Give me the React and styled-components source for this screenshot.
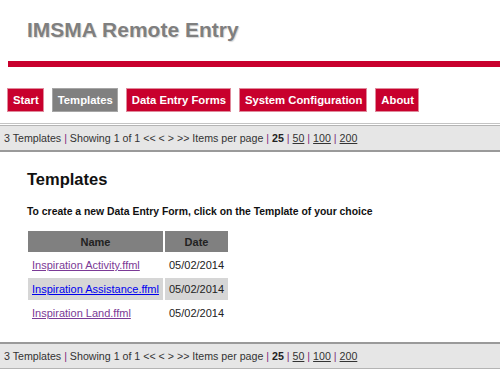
import React from "react";
import styled, { createGlobalStyle } from "styled-components";

const GlobalStyle = createGlobalStyle`
  html, body {
    margin: 0;
    padding: 0;
    background: #fff;
    font-family: "Liberation Sans", Arial, sans-serif;
  }
`;

const Page = styled.div`
  width: 500px;
  min-height: 382px;
  background: #fff;
`;

const Header = styled.header`
  padding: 18px 0 0 27px;
`;

const Title = styled.h1`
  margin: 0;
  font-size: 21px;
  line-height: 24px;
  font-weight: bold;
  color: #7f7f7f;
  text-shadow: 1px 1px 1px #d8d8d8;
`;

const RedRule = styled.div`
  height: 6px;
  margin: 19px 0 0 8px;
  background: #c8002d;
`;

const Nav = styled.nav`
  display: flex;
  gap: 10px;
  padding: 22px 0 12px 8px;
  border-bottom: 1px solid #c4c4c4;
`;

const NavButton = styled.a`
  display: block;
  height: 22px;
  padding: 0 4px 0 5px;
  line-height: 22px;
  font-size: 11.3px;
  font-weight: bold;
  color: #fff;
  text-decoration: none;
  background: ${p => (p.active ? "#808080" : "#c8002d")};
  box-shadow: 0 0 0 1px ${p => (p.active ? "#a6a6a6" : "#e08a9c")};
`;

const PagerBar = styled.div`
  margin-top: ${p => (p.bottom ? "16px" : "1px")};
  height: 24px;
  padding: 0 4px;
  line-height: 24px;
  font-size: 10.65px;
  color: #333;
  background: #e6e6e6;
  border-top: ${p => (p.bottom ? "2px solid #9a9a9a" : "1px solid #b4b4b4")};
  border-bottom: ${p => (p.bottom ? "1px solid #b4b4b4" : "2px solid #9a9a9a")};
`;

const Sep = styled.span`
  color: #7a2a7a;
`;

const Current = styled.b`
  color: #222;
`;

const PageLink = styled.a`
  color: #333;
  text-decoration: underline;
`;

const Content = styled.section`
  padding: 18px 0 0 27px;
`;

const Heading = styled.h2`
  margin: 0;
  font-size: 16.5px;
  line-height: 19px;
  font-weight: bold;
  color: #111;
`;

const Intro = styled.p`
  margin: 16px 0 0;
  font-size: 10.4px;
  line-height: 13px;
  font-weight: bold;
  color: #111;
`;

const Table = styled.table`
  margin: 11px 0 0 -1px;
  border-spacing: 2px;
  font-size: 11px;
`;

const Th = styled.th`
  height: 21px;
  padding: 0;
  width: ${p => p.w}px;
  background: #808080;
  color: #222;
  font-weight: bold;
  text-align: center;
`;

const Td = styled.td`
  height: 22px;
  padding: 0 4px;
  background: ${p => (p.hover ? "#d6d6d6" : "transparent")};
  color: #222;
`;

const FileLink = styled.a`
  color: ${p => (p.hover ? "#0000ee" : "#7b3a96")};
  text-decoration: underline;
`;

const templates = [
  { name: "Inspiration Activity.ffml", date: "05/02/2014" },
  { name: "Inspiration Assistance.ffml", date: "05/02/2014", hover: true },
  { name: "Inspiration Land.ffml", date: "05/02/2014" },
];

const Pager = ({ bottom }) => (
  <PagerBar bottom={bottom}>
    3 Templates <Sep>|</Sep> Showing 1 of 1 &lt;&lt; &lt; &gt; &gt;&gt; Items per page <Sep>|</Sep>{" "}
    <Current>25</Current> <Sep>|</Sep> <PageLink href="#">50</PageLink> <Sep>|</Sep>{" "}
    <PageLink href="#">100</PageLink> <Sep>|</Sep> <PageLink href="#">200</PageLink>
  </PagerBar>
);

export default function App() {
  return (
    <Page>
      <GlobalStyle />
      <Header>
        <Title>IMSMA Remote Entry</Title>
      </Header>
      <RedRule />
      <Nav>
        <NavButton href="#">Start</NavButton>
        <NavButton href="#" active>Templates</NavButton>
        <NavButton href="#">Data Entry Forms</NavButton>
        <NavButton href="#">System Configuration</NavButton>
        <NavButton href="#">About</NavButton>
      </Nav>
      <Pager />
      <Content>
        <Heading>Templates</Heading>
        <Intro>To create a new Data Entry Form, click on the Template of your choice</Intro>
        <Table>
          <thead>
            <tr>
              <Th w={135}>Name</Th>
              <Th w={63}>Date</Th>
            </tr>
          </thead>
          <tbody>
            {templates.map(t => (
              <tr key={t.name}>
                <Td hover={t.hover}>
                  <FileLink href="#" hover={t.hover}>{t.name}</FileLink>
                </Td>
                <Td hover={t.hover}>{t.date}</Td>
              </tr>
            ))}
          </tbody>
        </Table>
      </Content>
      <Pager bottom />
    </Page>
  );
}
